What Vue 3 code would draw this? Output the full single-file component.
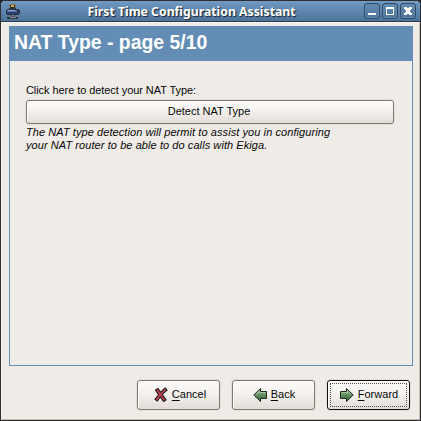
<script setup>
const controls = ['minimize', 'maximize', 'close']
</script>

<template>
  <main class="window">
    <header class="titlebar">
      <svg class="app-icon" width="16" height="17" viewBox="0 0 16 17" shape-rendering="crispEdges">
        <path fill="#2f3440" d="M3 1h7v5H3zM1 6h12v1H1zM0 7h14v4H0zM1 11h12v1H1zM5 12h4v2H5zM1 14h11v2H1z" />
        <path fill="#7d7a63" d="M3 1h7v4H3z" />
        <path fill="#2f3440" d="M4 2h5v3H4z" />
        <path fill="#cda748" d="M5 2h3v2H5z" />
        <path fill="#536ca5" d="M1 7h10v2H1z" />
        <path fill="#8ea2cf" d="M2 7h7v1H2z" />
        <path fill="#2c3d70" d="M1 9h12v2H1z" />
        <path fill="#8e919c" d="M4 14h6v1H4zM6 12h2v1H6z" />
        <path fill="#8e5c63" d="M6 13h2v1H6z" />
      </svg>
      <h1>First Time Configuration Assistant</h1>
      <nav class="controls">
        <button v-for="control in controls" :key="control" :aria-label="control">
          <svg width="14" height="14" viewBox="0 0 14 14" shape-rendering="crispEdges">
            <path v-if="control === 'minimize'" d="M3 9h8v2H3z" fill="white" />
            <path v-else-if="control === 'maximize'" d="M3 3h8v8H3zM4 5v5h6V5z" fill="white" fill-rule="evenodd" />
            <path v-else d="M3 3h3v1h2V3h3v2h-1v1H9v2h1v1h1v2H8v-1H6v1H3V9h1V8h1V6H4V5H3z" fill="white" />
          </svg>
        </button>
      </nav>
    </header>
    <section class="content">
      <section class="page">
        <h2><span>NAT Type - page 5/10</span></h2>
        <div class="page-body">
          <p class="prompt">Click here to detect your NAT Type:</p>
          <button class="button detect"><span>Detect NAT Type</span></button>
          <p class="help"><span class="line first">The NAT type detection will permit to assist you in configuring</span><span class="line second">your NAT router to be able to do calls with Ekiga.</span></p>
        </div>
      </section>
      <footer>
        <button class="button cancel">
          <svg width="14" height="16" viewBox="0 0 14 16">
            <path d="M3.5 3.5l6.5 9M11 3Q7 6 3 12" fill="none" stroke="#171313" stroke-width="4" stroke-linecap="square" />
            <path d="M3.5 3.5l6.5 9M11 3Q7 6 3 12" fill="none" stroke="#b84650" stroke-width="2" stroke-linecap="square" />
          </svg>
          <span><u>C</u>ancel</span>
        </button>
        <button class="button back">
          <svg width="15" height="16" viewBox="0 0 15 16">
            <defs><linearGradient id="back-green" x2="0" y2="1"><stop stop-color="#a9c6a4" /><stop offset=".5" stop-color="#628f60" /><stop offset="1" stop-color="#345939" /></linearGradient></defs>
            <path d="M.8 8L7.5 1.5v3h6v7h-6v3z" fill="url(#back-green)" stroke="#1d2a1e" />
            <path d="M3 7.5l3.5-3.2v1.2h6" fill="none" stroke="#a3c29c" />
          </svg>
          <span><u>B</u>ack</span>
        </button>
        <button class="button forward">
          <svg width="15" height="16" viewBox="0 0 15 16">
            <defs><linearGradient id="forward-green" x2="0" y2="1"><stop stop-color="#a9c6a4" /><stop offset=".5" stop-color="#628f60" /><stop offset="1" stop-color="#345939" /></linearGradient></defs>
            <path d="M14.2 8L7.5 1.5v3h-6v7h6v3z" fill="url(#forward-green)" stroke="#1d2a1e" />
            <path d="M2.5 5.5h6V4.2L11.5 7" fill="none" stroke="#a3c29c" />
          </svg>
          <span><u>F</u>orward</span>
        </button>
      </footer>
    </section>
  </main>
</template>

<style>
html, body { margin: 0; background: #20242b; overflow: hidden; }
</style>
<style scoped>
* { box-sizing: border-box; }
.window { width: 421px; height: 421px; border: 1px solid #302b2c; border-radius: 5px 5px 0 0; background: #efebe7; font: 11px/13px "Liberation Sans", sans-serif; color: #080808; overflow: hidden; }
h1, h2, p { margin: 0; }
button { padding: 0; font: inherit; color: inherit; }
.titlebar { height: 21px; display: flex; align-items: center; padding: 0 4px 0 5px; background: linear-gradient(#729bc4 0, #668fb8 25%, #5b83aa 60%, #4d7599 100%); border-bottom: 1px solid #293b4e; }
.app-icon { width: 16px; flex: none; margin-top: 1px; }
h1 { flex: 1; text-align: center; padding: 1px 3px 0 0; white-space: nowrap; color: #fff; font: bold 12.25px/18px "Noto Sans", sans-serif; text-shadow: 1px 1px 1px #17212d; }
.controls { display: flex; gap: 2px; width: 52px; }
.controls button { width: 16px; height: 16px; border: 1px solid #2c4966; border-radius: 3px; background: linear-gradient(#658db3, #4c7398); box-shadow: inset 0 0 0 1px #6288ac; display: grid; place-items: center; }
.content { height: 398px; border: 1px solid; border-color: #f9f5f2 #c2bbb5 #c2bbb5 #f9f5f2; padding: 3px 6px 0 7px; }
.page { height: 340px; border: 1px solid #638db5; }
h2 { height: 34px; padding: 3px 0 0 4px; background: #638db5; color: #fff; font: bold 19.4px/24px "Liberation Sans", sans-serif; white-space: nowrap; }
.page-body { padding: 23px 18px 0 16px; }
.prompt { height: 16px; letter-spacing: -.07px; white-space: nowrap; }
.button { border: 1px solid #837a6f; border-radius: 3px; background: linear-gradient(#fdfcfa, #f3f0ed 48%, #e3ddd7); box-shadow: inset 1px 1px #fff, 0 0 0 1px #e4deda; }
.detect { display: flex; align-items: center; justify-content: center; width: 368px; height: 24px; padding: 0 2px 1px 0; }
.help { padding-top: 2px; font-style: italic; white-space: nowrap; }
.line { display: block; height: 13px; letter-spacing: .075px; }
footer { display: flex; justify-content: flex-end; gap: 12px; padding: 14px 3px 0 0; }
footer .button { width: 83px; height: 30px; padding-bottom: 1px; display: flex; align-items: center; justify-content: center; gap: 4px; letter-spacing: .03px; }
footer .cancel { padding-left: 3px; }
footer .back { gap: 3px; padding-left: 1px; }
u { text-underline-offset: 2px; text-decoration-thickness: 1px; }
.forward { position: relative; border: 1px solid #111; }
.forward::after { content: ""; position: absolute; inset: 2px; border: 1px dotted #524e49; }
</style>
